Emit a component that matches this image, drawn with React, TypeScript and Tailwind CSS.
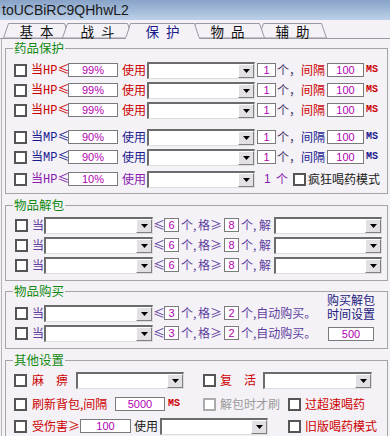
import React from 'react';

const TABS = [
  { t: ['基', '本'], w: 67, cls: 'ml-[3px] w-[67px] z-[1]' },
  { t: ['战', '斗'], w: 71, cls: '-ml-[8px] w-[71px] z-[2]' },
  { t: ['保', '护'], w: 75, cls: '-ml-[8px] w-[75px] z-[5]', active: true },
  { t: ['物', '品'], w: 75, cls: '-ml-[10px] w-[75px] z-[3]' },
  { t: ['辅', '助'], w: 69, cls: '-ml-[7px] w-[69px] z-[2]' },
];

const MED = [
  { kind: 'HP', pct: '99%', color: 'text-[#cc0000]', gap: '' },
  { kind: 'HP', pct: '99%', color: 'text-[#cc0000]', gap: 'mt-[2px]' },
  { kind: 'HP', pct: '99%', color: 'text-[#cc0000]', gap: 'mt-[2px]' },
  { kind: 'MP', pct: '90%', color: 'text-[#1a1a90]', gap: 'mt-[9px]' },
  { kind: 'MP', pct: '90%', color: 'text-[#1a1a90]', gap: 'mt-[2px]' },
];

function Check({ disabled }: { disabled?: boolean }) {
  return (
    <span
      className={`block w-[13px] h-[13px] shrink-0 bg-white border-2 ${disabled ? 'border-[#ababab]' : 'border-[#555555]'}`}
    />
  );
}

function Select({ className = '' }: { className?: string }) {
  return (
    <div
      className={`flex h-[17px] shrink-0 bg-white border-t-2 border-l-2 border-r border-b border-t-[#6c6c6c] border-l-[#6c6c6c] border-r-[#dcdcdc] border-b-[#dcdcdc] ${className}`}
    >
      <div className="flex-1" />
      <div className="w-[16px] h-full flex items-center justify-center bg-[#e2e0e4] border border-t-white border-l-white border-r-[#808080] border-b-[#808080]">
        <svg width="7" height="4" viewBox="0 0 7 4">
          <path d="M0 0H7L3.5 4Z" fill="#000" />
        </svg>
      </div>
    </div>
  );
}

function Num({ v, className = '' }: { v: string; className?: string }) {
  return (
    <div
      className={`h-[14px] shrink-0 flex items-center justify-center bg-white border border-[#7a7a7a] font-['Liberation_Sans',sans-serif] text-[11px] leading-none text-[#b000b0] ${className}`}
    >
      {v}
    </div>
  );
}

function T({ className = '', children }: { className?: string; children: React.ReactNode }) {
  return <span className={`shrink-0 whitespace-nowrap text-[12px] leading-[14px] ${className}`}>{children}</span>;
}

function Latin({ children }: { children: React.ReactNode }) {
  return <span className="font-['Liberation_Mono',monospace] text-[12px]">{children}</span>;
}

function Ms({ className = '' }: { className?: string }) {
  return (
    <span className={`shrink-0 font-['Liberation_Mono',monospace] text-[10px] font-bold leading-none ${className}`}>MS</span>
  );
}

function Row({ className = '', children }: { className?: string; children: React.ReactNode }) {
  return <div className={`flex items-center h-[18px] ${className}`}>{children}</div>;
}

function Group({ title, className = '', children }: { title: string; className?: string; children: React.ReactNode }) {
  return (
    <fieldset className={`ml-[3px] w-[383px] border border-[#a4a4a4] ${className}`}>
      <legend className="ml-[7px] px-[1px] text-[12.5px] leading-[14px] text-[#128a12]">{title}</legend>
      {children}
    </fieldset>
  );
}

function ItemRow({ a, b, tail, className = '' }: { a: string; b: string; tail: React.ReactNode; className?: string }) {
  return (
    <Row className={className}>
      <span className="ml-[9px]">
        <Check />
      </span>
      <T className="ml-[4px] w-[12px] text-[#6040a0]">当</T>
      <Select className="w-[109px]" />
      <T className="w-[11px] text-[#6040a0]">≤</T>
      <Num v={a} className="w-[15px] h-[13px]" />
      <T className="ml-[2px] w-[17px] text-[#6040a0]">个,</T>
      <T className="w-[25px] text-[#6040a0]">格≥</T>
      <Num v={b} className="ml-[1px] w-[15px] h-[13px]" />
      {tail}
    </Row>
  );
}

export default function App() {
  return (
    <div className="w-[390px] h-[436px] overflow-hidden bg-[#f4f2f6] font-['Noto_Sans_CJK_SC',sans-serif] text-[#1a1a1a]">
      <div className="h-[20px] flex items-center pl-[2px] bg-linear-to-b from-[#88a3c8] to-[#bcd1e8] font-['Liberation_Sans',sans-serif] text-[14px] text-[#1a1a1a]">
        toUCBiRC9QHhwL2
      </div>

      <div className="h-[19px] flex items-end border-b border-[#9a98a0]">
        {TABS.map((tab) => (
          <div
            key={tab.t.join('')}
            className={`relative shrink-0 flex items-center justify-center ${tab.cls} ${tab.active ? 'h-[16px] -mb-[1px] text-[#1a1a8c]' : 'h-[15px] text-[#111111]'}`}
          >
            <svg className="absolute inset-0" width={tab.w} height={tab.active ? 16 : 15}>
              <polygon
                points={`0.5,${tab.active ? 16 : 15} 5.5,0.5 ${tab.w - 5.5},0.5 ${tab.w - 0.5},${tab.active ? 16 : 15}`}
                fill="#f4f2f6"
                stroke="#9a98a0"
              />
              {tab.active && <rect x="1" y="14" width={tab.w - 2} height="2" fill="#f4f2f6" />}
            </svg>
            <span className={`relative flex gap-[7px] text-[13.5px] leading-[14px] ${tab.active ? '-mt-[1px]' : ''}`}>
              <span>{tab.t[0]}</span>
              <span>{tab.t[1]}</span>
            </span>
          </div>
        ))}
      </div>

      <div className="flex flex-col border-l border-[#b4b4b4] ml-[1px] h-[397px]">
        <Group title="药品保护" className="mt-[2px] pt-[6px] pb-[5px]">
          {MED.map((m, i) => (
            <Row key={i} className={m.gap}>
              <span className="ml-[8px]">
                <Check />
              </span>
              <T className={`ml-[4px] w-[36px] ${m.color}`}>
                当<Latin>{m.kind}</Latin>≤
              </T>
              <Num v={m.pct} className="ml-[1px] w-[50px]" />
              <T className={`ml-[4px] w-[24px] ${m.color}`}>使用</T>
              <Select className="ml-[1px] w-[108px]" />
              <Num v="1" className="ml-[2px] w-[19px]" />
              <T className="ml-[1px] w-[24px] text-[#4b3b6b]">个，</T>
              <T className={`w-[24px] ${m.color}`}>间隔</T>
              <Num v="100" className="ml-[2px] w-[37px]" />
              <Ms className={`ml-[2px] ${m.color}`} />
            </Row>
          ))}
          <Row className="mt-[4px]">
            <span className="ml-[8px]">
              <Check />
            </span>
            <T className="ml-[4px] w-[36px] text-[#8a1ab0]">
              当<Latin>HP</Latin>≤
            </T>
            <Num v="10%" className="ml-[1px] w-[50px]" />
            <T className="ml-[4px] w-[24px] text-[#8a1ab0]">使用</T>
            <Select className="ml-[1px] w-[108px]" />
            <T className="ml-[9px] w-[8px] text-[#8a1ab0] font-['Liberation_Sans',sans-serif]">1</T>
            <T className="ml-[4px] w-[13px] text-[#8a1ab0]">个</T>
            <span className="ml-[4px]">
              <Check />
            </span>
            <T className="ml-[2px] text-[12.5px] text-[#1a1a1a]">疯狂喝药模式</T>
          </Row>
        </Group>

        <Group title="物品解包" className="mt-[4px] pt-[4px] pb-[6px]">
          {['', 'mt-[2px]', 'mt-[2px]'].map((g, i) => (
            <ItemRow
              key={i}
              className={g}
              a="6"
              b="8"
              tail={
                <>
                  <T className="ml-[2px] w-[18px] text-[#6040a0]">个,</T>
                  <T className="w-[13px] text-[#6040a0]">解</T>
                  <Select className="ml-[2px] w-[108px]" />
                </>
              }
            />
          ))}
        </Group>

        <Group title="物品购买" className="mt-[3px] pb-[6px]">
          <div className="flex">
            <div className="w-[317px] pt-[6px] flex flex-col">
              {['', 'mt-[2px]'].map((g, i) => (
                <ItemRow
                  key={i}
                  className={g}
                  a="3"
                  b="2"
                  tail={<T className="ml-[2px] w-[74px] text-[#6040a0]">个,自动购买。</T>}
                />
              ))}
            </div>
            <div className="w-[56px] -mt-[6px] flex flex-col items-center">
              <span className="block text-[12px] leading-[15px] text-[#1c2080]">购买解包</span>
              <span className="block -mt-[1px] text-[12px] leading-[15px] text-[#1c2080]">时间设置</span>
              <Num v="500" className="mt-[6px] w-[46px]" />
            </div>
          </div>
        </Group>

        <Group title="其他设置" className="mt-[4px] pt-[4px] pb-[10px]">
          <Row>
            <span className="ml-[8px]">
              <Check />
            </span>
            <T className="ml-[5px] w-[36px] text-[#cc0000]">麻　痹</T>
            <Select className="ml-[8px] w-[108px]" />
            <span className="ml-[19px]">
              <Check />
            </span>
            <T className="ml-[4px] w-[36px] text-[#cc0000]">复　活</T>
            <Select className="ml-[7px] w-[109px]" />
          </Row>
          <Row className="mt-[6px]">
            <span className="ml-[8px]">
              <Check />
            </span>
            <T className="ml-[5px] w-[78px] text-[#cc0000]">刷新背包,间隔</T>
            <Num v="5000" className="ml-[5px] w-[50px]" />
            <Ms className="ml-[3px] w-[14px] text-[#cc0000]" />
            <span className="ml-[21px]">
              <Check disabled />
            </span>
            <T className="ml-[4px] w-[60px] text-[#9a9a9a]">解包时才刷</T>
            <span className="ml-[8px]">
              <Check />
            </span>
            <T className="ml-[4px] text-[#cc0000]">过超速喝药</T>
          </Row>
          <Row className="mt-[4px]">
            <span className="ml-[8px]">
              <Check />
            </span>
            <T className="ml-[5px] w-[47px] text-[#cc0000]">受伤害≥</T>
            <Num v="100" className="ml-[1px] w-[51px]" />
            <T className="ml-[3px] w-[24px] text-[#1a1a1a]">使用</T>
            <Select className="ml-[2px] w-[108px]" />
            <span className="ml-[20px]">
              <Check />
            </span>
            <T className="ml-[4px] text-[#cc0000]">旧版喝药模式</T>
          </Row>
        </Group>
      </div>
    </div>
  );
}
